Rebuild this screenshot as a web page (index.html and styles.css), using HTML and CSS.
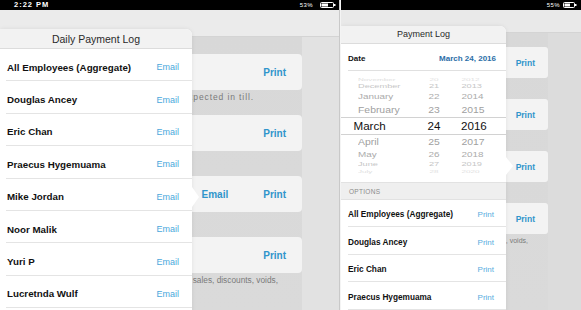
FILE: index.html
```html
<!DOCTYPE html>
<html lang="en">
<head>
<meta charset="utf-8">
<title>Payment Log</title>
<link rel="stylesheet" href="styles.css">
</head>
<body>
<div class="shots">
  <section class="screen screen-left">
    <div class="status">
      <span class="time">2:22 PM</span>
      <span class="batt">53%
        <svg class="batt-icon" width="16" height="6" viewBox="0 0 16 6"><rect x="0.5" y="0.5" width="13" height="5" rx="1" fill="none" stroke="#fff"/><rect x="1.5" y="1.5" width="6.5" height="3" fill="#fff"/><rect x="14" y="2" width="1.5" height="2" fill="#fff"/></svg>
      </span>
    </div>
    <div class="app">
      <div class="navbar"></div>
      <div class="content">
        <div class="main">
          <div class="group">
            <div class="card"><span class="btn">Print</span></div>
            <p class="desc desc-1"><span class="desc-text">Prints payments by type and cash expected in till.</span></p>
          </div>
          <div class="group">
            <div class="card"><span class="btn">Print</span></div>
          </div>
          <div class="group">
            <div class="card"><span class="btn">Email</span><span class="btn">Print</span></div>
          </div>
          <div class="group">
            <div class="card"><span class="btn">Print</span></div>
            <p class="desc desc-4"><span class="desc-text">Totals of sales, discounts, voids,</span></p>
          </div>
        </div>
        <div class="side"></div>
      </div>
      <div class="popover">
        <div class="pop-title">Daily Payment Log</div>
        <div class="pop-row"><span class="name">All Employees (Aggregate)</span><span class="link">Email</span></div>
        <div class="pop-row"><span class="name">Douglas Ancey</span><span class="link">Email</span></div>
        <div class="pop-row"><span class="name">Eric Chan</span><span class="link">Email</span></div>
        <div class="pop-row"><span class="name">Praecus Hygemuama</span><span class="link">Email</span></div>
        <div class="pop-row"><span class="name">Mike Jordan</span><span class="link">Email</span></div>
        <div class="pop-row"><span class="name">Noor Malik</span><span class="link">Email</span></div>
        <div class="pop-row"><span class="name">Yuri P</span><span class="link">Email</span></div>
        <div class="pop-row"><span class="name">Lucretnda Wulf</span><span class="link">Email</span></div>
        <div class="arrow"></div>
      </div>
    </div>
  </section>
  <div class="divider"></div>
  <section class="screen screen-right">
    <div class="status">
      <span class="time"></span>
      <span class="batt">55%
        <svg class="batt-icon" width="14" height="6" viewBox="0 0 14 6"><rect x="0.5" y="0.5" width="11" height="5" rx="1" fill="none" stroke="#fff"/><rect x="1.5" y="1.5" width="5.5" height="3" fill="#fff"/><rect x="12" y="2" width="1.5" height="2" fill="#fff"/></svg>
      </span>
    </div>
    <div class="app">
      <div class="navbar"></div>
      <div class="content">
        <div class="main">
          <div class="group">
            <div class="card"><span class="btn">Print</span></div>
          </div>
          <div class="group">
            <div class="card"><span class="btn">Print</span></div>
          </div>
          <div class="group">
            <div class="card"><span class="btn">Print</span></div>
          </div>
          <div class="group">
            <div class="card"><span class="btn">Print</span></div>
            <p class="desc desc-4"><span class="desc-text">Totals of sales, discounts, voids,</span></p>
          </div>
        </div>
        <div class="side"></div>
      </div>
      <div class="popover">
        <div class="pop-title">Payment Log</div>
        <div class="date-row"><span class="date-label">Date</span><span class="date-val">March 24, 2016</span></div>
        <div class="picker">
          <div class="prow r4"><span class="pm">November</span><span class="pd">20</span><span class="py">2012</span></div>
          <div class="prow r3"><span class="pm">December</span><span class="pd">21</span><span class="py">2013</span></div>
          <div class="prow r2"><span class="pm">January</span><span class="pd">22</span><span class="py">2014</span></div>
          <div class="prow r1"><span class="pm">February</span><span class="pd">23</span><span class="py">2015</span></div>
          <div class="prow r0"><span class="pm">March</span><span class="pd">24</span><span class="py">2016</span></div>
          <div class="prow r1"><span class="pm">April</span><span class="pd">25</span><span class="py">2017</span></div>
          <div class="prow r2"><span class="pm">May</span><span class="pd">26</span><span class="py">2018</span></div>
          <div class="prow r3"><span class="pm">June</span><span class="pd">27</span><span class="py">2019</span></div>
          <div class="prow r4"><span class="pm">July</span><span class="pd">28</span><span class="py">2020</span></div>
        </div>
        <div class="options-head">OPTIONS</div>
        <div class="opt-row"><span class="opt-name">All Employees (Aggregate)</span><span class="opt-link">Print</span></div>
        <div class="opt-row"><span class="opt-name">Douglas Ancey</span><span class="opt-link">Print</span></div>
        <div class="opt-row"><span class="opt-name">Eric Chan</span><span class="opt-link">Print</span></div>
        <div class="opt-row"><span class="opt-name">Praecus Hygemuama</span><span class="opt-link">Print</span></div>
        <div class="arrow"></div>
      </div>
    </div>
  </section>
</div>
</body>
</html>
```

FILE: styles.css
```css
* { box-sizing: border-box; margin: 0; padding: 0; }
html, body { width: 581px; height: 310px; overflow: hidden; }
body { font-family: "Liberation Sans", Arial, sans-serif; background: #f4f4f4; }

.shots { display: flex; width: 581px; height: 310px; }
.screen { position: relative; height: 310px; overflow: hidden; display: flex; flex-direction: column; flex: none; }
.screen-left { width: 339px; }
.divider { width: 2px; flex: none; background: #f4f4f4; border-left: 1px solid #c9c9c9; }
.screen-right { width: 240px; }

/* status bar */
.status { height: 10px; flex: none; background: #000; color: #fff; display: flex; align-items: center; justify-content: space-between; }
.time { font-size: 7.5px; font-weight: bold; letter-spacing: 1px; padding-left: 14px; line-height: 10px; }
.batt { display: flex; align-items: center; gap: 7px; font-size: 6px; letter-spacing: 0.4px; padding-right: 3px; line-height: 10px; }
.screen-right .batt { gap: 3px; padding-right: 4px; }
.batt-icon { display: block; }

/* background app */
.app { position: relative; flex: 1; display: flex; flex-direction: column; min-height: 0; }
.navbar { height: 27px; flex: none; background: #ebebeb; border-bottom: 1px solid #d4d4d4; }
.content { flex: 1; display: flex; min-width: 0; }
.main { flex: 1; min-width: 0; background: linear-gradient(180deg, #d8d8d8, #dadada); padding: 17px 0 0 24px; }
.side { width: 37px; flex: none; background: #e2e2e2; }
.group { height: 61px; }
.card { height: 36px; background: #f3f3f3; border-radius: 4px; display: flex; align-items: center; justify-content: flex-end; gap: 35px; padding-right: 16px; }
.btn { font-size: 10px; font-weight: bold; color: #2f95cb; }

/* descriptions: right-aligned, the part under the popover is clipped off */
.desc { margin-top: 2px; margin-left: 168px; min-width: 0; display: flex; justify-content: flex-end; overflow: hidden; font-size: 8.3px; line-height: 10px; color: #7a7a7a; }
.desc-text { flex: none; white-space: nowrap; }
.desc-1 { margin-right: 48px; font-size: 8.5px; letter-spacing: 0.9px; }
.desc-4 { margin-right: 24px; }

.screen-right .navbar { height: 23px; background: #e9e9e9; }
.screen-right .main { padding: 14px 0 0 20px; }
.screen-right .side { width: 33px; background: #dcdcdc; }
.screen-right .group { height: 52px; }
.screen-right .card { height: 31px; padding-right: 13px; border-radius: 3px; }
.screen-right .btn { font-size: 8.5px; }
.screen-right .desc { margin-top: 1.5px; margin-left: 145px; font-size: 7px; line-height: 9px; margin-right: 20px; }

/* popover (left) */
.popover { position: absolute; left: 0; top: 19px; width: 192px; bottom: -30px; background: #fff; border-radius: 0 6px 0 0; box-shadow: 0 0 4px rgba(0,0,0,0.08); }
.pop-title { height: 20px; background: #f2f2f2; border-bottom: 1px solid #dcdcdc; border-radius: 0 6px 0 0; display: flex; align-items: center; justify-content: center; font-size: 10.5px; color: #2a2a2a; }
.pop-row { height: 32.4px; margin-left: 6px; padding: 5px 13px 0 1px; border-bottom: 1px solid #e4e4e4; display: flex; align-items: center; justify-content: space-between; }
.name { font-size: 9.75px; font-weight: bold; color: #111; }
.link { font-size: 9px; color: #4aa8dc; }
.arrow { position: absolute; left: 100%; top: 158px; width: 0; height: 0; border-left: 7px solid #fff; border-top: 10px solid transparent; border-bottom: 10px solid transparent; }

/* popover (right) */
.screen-right .popover { top: 16px; width: 165px; }
.screen-right .pop-title { height: 17.5px; font-size: 9px; }
.screen-right .arrow { top: 131px; border-top-width: 9px; border-bottom-width: 9px; }
.date-row { height: 27px; margin-left: 7px; padding: 3px 10px 0 0; border-bottom: 1px solid #e0e0e0; display: flex; align-items: center; justify-content: space-between; }
.date-label { font-size: 8px; font-weight: bold; color: #111; }
.date-val { font-size: 8px; font-weight: bold; color: #2b6ea7; }

/* date wheel */
.picker { height: 111px; display: flex; flex-direction: column; justify-content: center; overflow: hidden; }
.prow { display: grid; grid-template-columns: 75px 36px 1fr; align-items: center; line-height: 1; }
.prow span { display: block; white-space: nowrap; }
.pm { padding-left: 17px; transform-origin: 17px 50%; }
.pd { text-align: center; }
.py { padding-left: 9.5px; transform-origin: 9.5px 50%; }
.r0 { height: 17.5px; font-size: 11.6px; color: #111; border-top: 1px solid #d2d2d2; border-bottom: 1px solid #d2d2d2; }
.r0 .pm { padding-left: 12.5px; }
.r0 .py { padding-left: 9px; }
.r1 { height: 14.25px; font-size: 10.4px; color: #9f9f9f; }
.r1 span { transform: scaleY(0.92); }
.r2 { height: 12px; font-size: 9.9px; color: #ababab; }
.r2 span { transform: scaleY(0.78); }
.r3 { height: 8px; font-size: 8px; color: #c6c6c6; }
.r3 span { transform: scale(1.15, 0.65); }
.r4 { height: 6px; font-size: 6px; color: #e0e0e0; }
.r4 span { transform: scale(1.35, 0.5); }

.options-head { height: 18px; background: #efefef; border-top: 1px solid #e2e2e2; border-bottom: 1px solid #e2e2e2; padding-left: 8px; padding-top: 1px; font-size: 6.5px; letter-spacing: 0.3px; color: #8a8a8a; display: flex; align-items: center; }
.opt-row { height: 27.5px; margin-left: 7px; padding: 4px 12px 0 0; border-bottom: 1px solid #e4e4e4; display: flex; align-items: center; justify-content: space-between; }
.opt-name { font-size: 8.25px; font-weight: bold; color: #111; }
.opt-link { font-size: 8px; color: #58ade0; }
```
